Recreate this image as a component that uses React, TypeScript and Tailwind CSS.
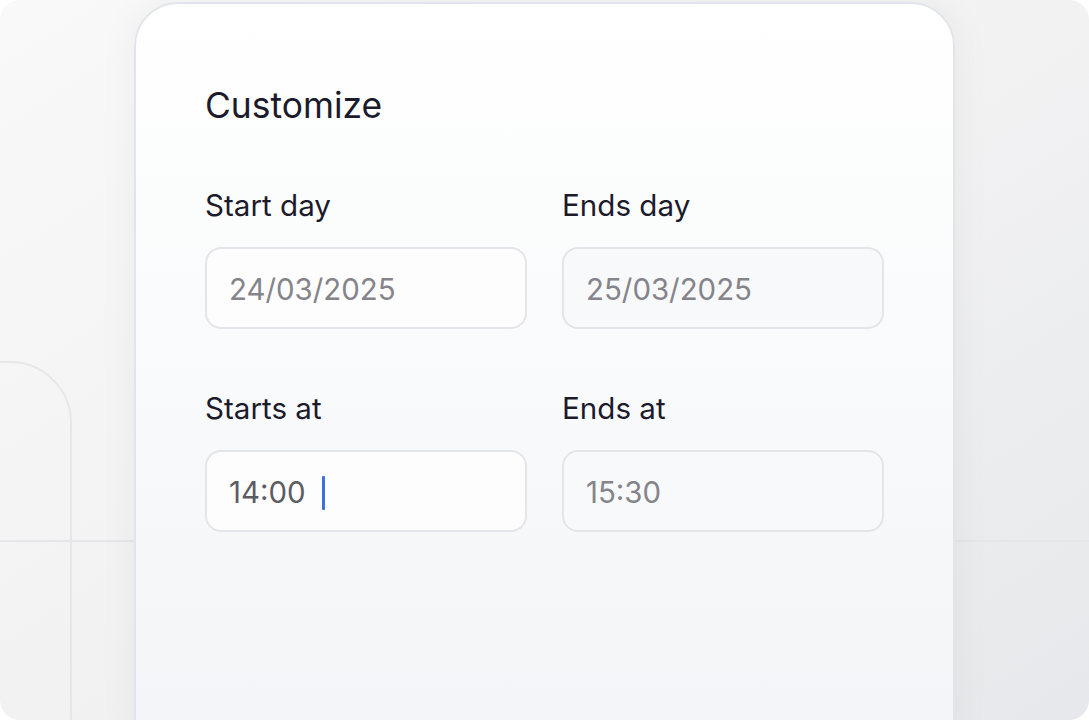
import React from "react";

const font = { fontFamily: "Inter, 'Noto Sans', sans-serif" };

function Field({ label, value, muted, cursor, dark }: { label: string; value: string; muted?: boolean; cursor?: boolean; dark?: boolean }) {
  return (
    <div className="flex flex-col">
      <div className="text-[29.6px] leading-[30px] text-[#1b1b2c]">{label}</div>
      <div
        className={
          "mt-[27px] h-[82px] rounded-[16px] border-2 border-[#e4e5ea] flex items-center pl-[22px] pt-[4px] " +
          (muted ? "bg-[#f8f9fa]" : "bg-[#fdfdfe]")
        }
      >
        <span className={"text-[29.4px] leading-[34px] " + (dark ? "text-[#5c5c63]" : "text-[#84848a]")}>{value}</span>
        {cursor && <span className="ml-[16px] w-[3px] h-[34px] bg-[#3f72d8] rounded-[1px]" />}
      </div>
    </div>
  );
}

export default function App() {
  return (
    <div className="w-[1089px] h-[720px] bg-white" style={font}>
      <div className="relative w-[1089px] h-[720px] overflow-hidden rounded-[20px] bg-gradient-to-br from-[#f9f9f9] via-[#f2f2f3] to-[#e7e8eb]">
        {/* background decorations */}
        <div className="absolute left-[-100px] top-[361px] w-[172px] h-[500px] rounded-tr-[62px] border-2 border-[#e7e7ea]" />
        <div className="absolute left-0 right-0 top-[540px] h-[2px] bg-[#e5e6e9]" />

        {/* card */}
        <div className="relative ml-[134px] mt-[2px] w-[821px] h-[760px] rounded-[44px] border-2 border-[#e2e4ec] bg-gradient-to-b from-[#ffffff] via-[#f9fafb] to-[#f3f4f7] shadow-[0_0_40px_rgba(20,20,40,0.05)] pt-[82px] px-[69px]">
          <div className="text-[35.4px] leading-[40px] text-[#1b1b2c]">Customize</div>
          <div className="mt-[64px] grid grid-cols-2 gap-x-[35px] gap-y-[64px]">
            <Field label="Start day" value="24/03/2025" />
            <Field label="Ends day" value="25/03/2025" muted />
            <Field label="Starts at" value="14:00" cursor dark />
            <Field label="Ends at" value="15:30" muted />
          </div>
        </div>
      </div>
    </div>
  );
}
